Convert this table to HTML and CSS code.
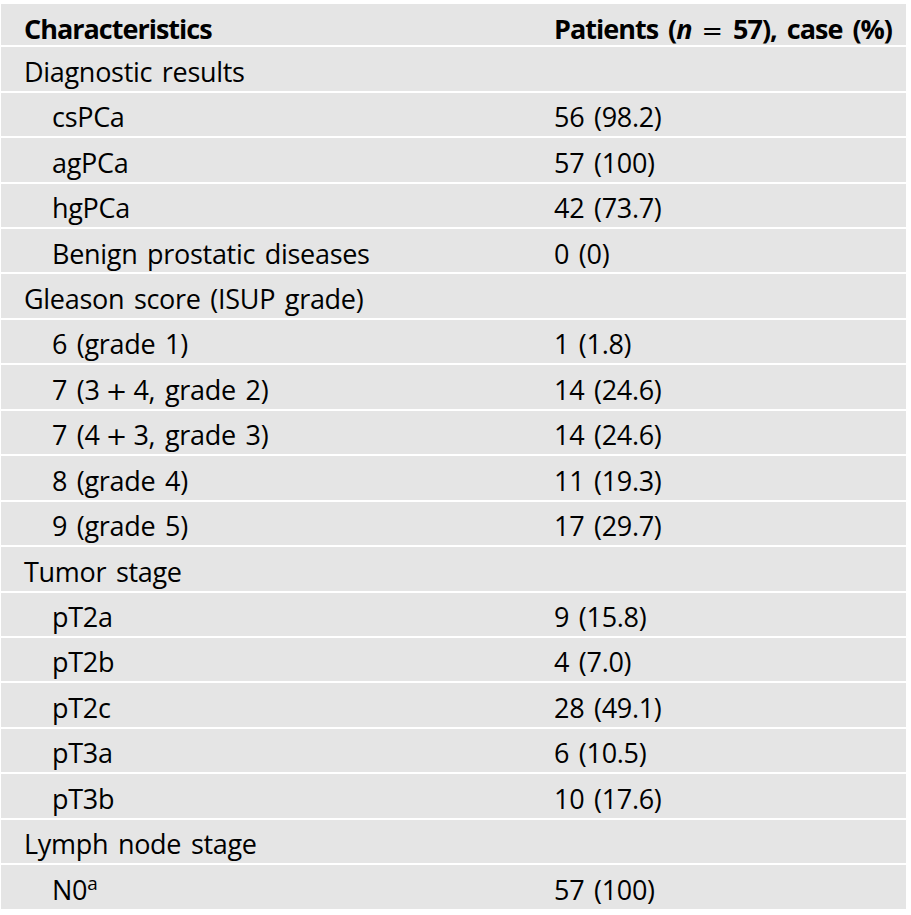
FILE: index.html
```html
<!DOCTYPE html>
<html lang="en">
<head>
<meta charset="utf-8">
<title>Patient characteristics</title>
<link rel="stylesheet" href="styles.css">
</head>
<body>
<div class="table">
  <div class="row head">
    <div class="cell label">Characteristics</div>
    <div class="cell value">Patients (<i>n</i> <span class="op">=</span> 57), case (%)</div>
  </div>
  <div class="row"><div class="cell label">Diagnostic results</div><div class="cell value"></div></div>
  <div class="row"><div class="cell label sub">csPCa</div><div class="cell value">56 (98.2)</div></div>
  <div class="row"><div class="cell label sub">agPCa</div><div class="cell value">57 (100)</div></div>
  <div class="row"><div class="cell label sub">hgPCa</div><div class="cell value">42 (73.7)</div></div>
  <div class="row"><div class="cell label sub">Benign prostatic diseases</div><div class="cell value">0 (0)</div></div>
  <div class="row"><div class="cell label">Gleason score (ISUP grade)</div><div class="cell value"></div></div>
  <div class="row"><div class="cell label sub">6 (grade 1)</div><div class="cell value">1 (1.8)</div></div>
  <div class="row"><div class="cell label sub">7 (3<span class="op plus"> + </span>4, grade 2)</div><div class="cell value">14 (24.6)</div></div>
  <div class="row"><div class="cell label sub">7 (4<span class="op plus"> + </span>3, grade 3)</div><div class="cell value">14 (24.6)</div></div>
  <div class="row"><div class="cell label sub">8 (grade 4)</div><div class="cell value">11 (19.3)</div></div>
  <div class="row"><div class="cell label sub">9 (grade 5)</div><div class="cell value">17 (29.7)</div></div>
  <div class="row"><div class="cell label">Tumor stage</div><div class="cell value"></div></div>
  <div class="row"><div class="cell label sub">pT2a</div><div class="cell value">9 (15.8)</div></div>
  <div class="row"><div class="cell label sub">pT2b</div><div class="cell value">4 (7.0)</div></div>
  <div class="row"><div class="cell label sub">pT2c</div><div class="cell value">28 (49.1)</div></div>
  <div class="row"><div class="cell label sub">pT3a</div><div class="cell value">6 (10.5)</div></div>
  <div class="row"><div class="cell label sub">pT3b</div><div class="cell value">10 (17.6)</div></div>
  <div class="row"><div class="cell label">Lymph node stage</div><div class="cell value"></div></div>
  <div class="row"><div class="cell label sub">N0<sup class="note">a</sup></div><div class="cell value">57 (100)</div></div>
</div>
</body>
</html>
```
FILE: styles.css
```css
html, body {
  margin: 0;
  padding: 0;
  background: #ffffff;
}
body {
  font-family: "Open Sans", "DejaVu Sans", sans-serif;
  font-size: 27px;
  color: #000000;
}
.table {
  display: flex;
  flex-direction: column;
  gap: 2px;
  width: 905px;
  margin: 4px 0 0 1px;
  letter-spacing: -0.3px;
  word-spacing: 3px;
}
.row {
  display: grid;
  grid-template-columns: 553px 1fr;
  height: 43.45px;
  background: #e5e5e5;
}
.row.head {
  height: 41.3px;
  font-weight: 700;
  letter-spacing: -1px;
  word-spacing: 4px;
}
.cell {
  box-sizing: border-box;
  padding-top: 5.5px;
  line-height: 38px;
  white-space: nowrap;
}
.label {
  padding-left: 23px;
}
.label.sub {
  padding-left: 51px;
}
.value {
  padding-left: 0;
}
.op {
  font-family: "DejaVu Sans", sans-serif;
  font-weight: 400;
  font-size: 0.95em;
  letter-spacing: 0;
}
.op.plus {
  word-spacing: -2px;
}
.note {
  font-size: 0.7em;
  line-height: 0;
  vertical-align: 0.55em;
}
```
